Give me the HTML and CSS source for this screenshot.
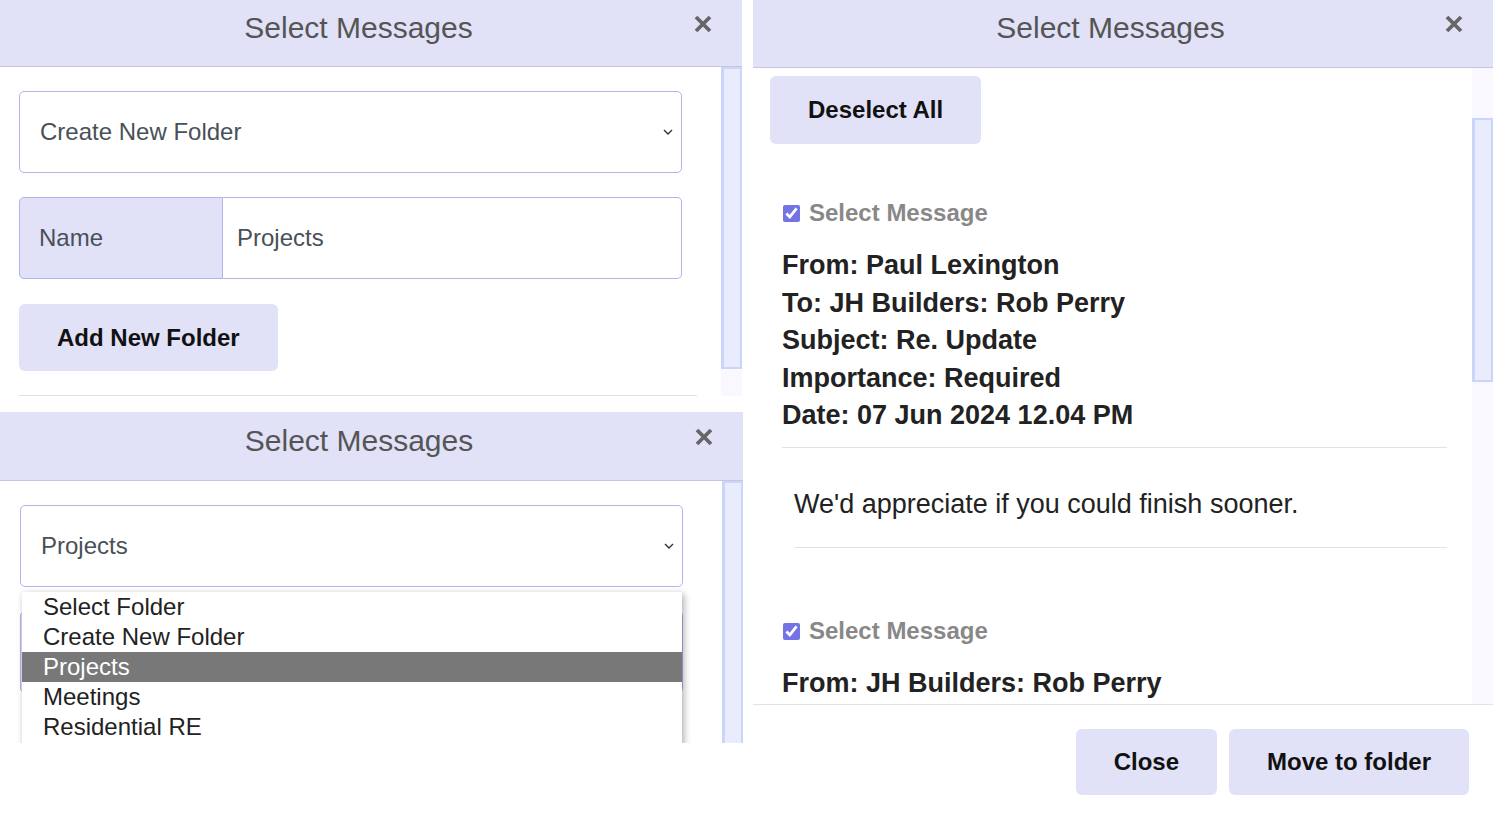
FILE: index.html
```html
<!DOCTYPE html>
<html lang="en">
<head>
<meta charset="utf-8">
<title>Select Messages</title>
<link rel="stylesheet" href="styles.css">
</head>
<body>
<div class="canvas">
  <div class="col-left">
    <section class="modal m1">
      <header class="modal-head">
        <h2 class="modal-title">Select Messages</h2>
        <button class="close" aria-label="Close"><svg viewBox="0 0 18 18"><path d="M2 2L16 16M16 2L2 16"/></svg></button>
      </header>
      <div class="modal-body">
        <div class="pane form-pane">
          <div class="select"><span>Create New Folder</span><svg class="chev" viewBox="0 0 10 6"><path d="M1 1l4 4 4-4"/></svg></div>
          <div class="input-group"><span class="ig-label">Name</span><span class="ig-input">Projects</span></div>
          <button class="btn btn-add">Add New Folder</button>
          <div class="rule"></div>
        </div>
        <div class="scrollbar"><div class="thumb"></div></div>
      </div>
    </section>
    <section class="modal m2">
      <header class="modal-head">
        <h2 class="modal-title">Select Messages</h2>
        <button class="close" aria-label="Close"><svg viewBox="0 0 18 18"><path d="M2 2L16 16M16 2L2 16"/></svg></button>
      </header>
      <div class="modal-body">
        <div class="pane form-pane">
          <div class="select"><span>Projects</span><svg class="chev" viewBox="0 0 10 6"><path d="M1 1l4 4 4-4"/></svg>
            <ul class="dropdown">
              <li>Select Folder</li>
              <li>Create New Folder</li>
              <li class="active">Projects</li>
              <li>Meetings</li>
              <li>Residential RE</li>
            </ul>
          </div>
          <div class="input-group"><span class="ig-label"></span><span class="ig-input"></span></div>
        </div>
        <div class="scrollbar"><div class="thumb"></div></div>
      </div>
    </section>
  </div>
  <section class="modal right">
    <header class="modal-head">
      <h2 class="modal-title">Select Messages</h2>
      <button class="close" aria-label="Close"><svg viewBox="0 0 18 18"><path d="M2 2L16 16M16 2L2 16"/></svg></button>
    </header>
    <div class="modal-body">
      <div class="pane msg-pane">
        <button class="btn btn-deselect">Deselect All</button>
        <div class="msg msg-1">
          <label class="msg-check"><input type="checkbox" checked>Select Message</label>
          <div class="msg-info">
            <div>From: Paul Lexington</div>
            <div>To: JH Builders: Rob Perry</div>
            <div>Subject: Re. Update</div>
            <div>Importance: Required</div>
            <div>Date: 07 Jun 2024 12.04 PM</div>
          </div>
          <div class="msg-rule"></div>
          <div class="msg-text">We'd appreciate if you could finish sooner.</div>
          <div class="msg-rule msg-rule2"></div>
        </div>
        <div class="msg msg-2">
          <label class="msg-check"><input type="checkbox" checked>Select Message</label>
          <div class="msg-info">
            <div>From: JH Builders: Rob Perry</div>
          </div>
        </div>
      </div>
      <div class="scrollbar"><div class="thumb"></div></div>
    </div>
    <footer class="modal-foot">
      <button class="btn btn-foot">Close</button>
      <button class="btn btn-foot">Move to folder</button>
    </footer>
  </section>
</div>
</body>
</html>
```

FILE: styles.css
```css
* { box-sizing: border-box; }
html, body { margin: 0; padding: 0; background: #fff; }
body {
  font-family: "Liberation Sans", Arial, sans-serif;
  color: #222;
  width: 1493px;
  height: 819px;
  overflow: hidden;
}
.canvas { display: flex; align-items: flex-start; }
.col-left { width: 743px; display: flex; flex-direction: column; gap: 16px; }

.modal { background: #fff; display: flex; flex-direction: column; overflow: hidden; }
.m1 { width: 742px; height: 396px; }
.m2 { width: 743px; height: 331px; }
.right { width: 740px; height: 819px; margin-left: 10px; }

.modal-head {
  display: flex;
  align-items: flex-start;
  background: #e1e1f7;
  border-bottom: 1px solid #c6c6da;
  flex: none;
}
.m1 .modal-head { height: 67px; }
.m2 .modal-head { height: 69px; }
.right .modal-head { height: 68px; }

.modal-title {
  flex: 1;
  margin: 0;
  padding-top: 10px;
  text-align: center;
  font-weight: 400;
  font-size: 30px;
  line-height: 36px;
  color: #555;
}
.m2 .modal-title { padding-top: 11px; }

.close {
  width: 48px;
  margin-left: -23px;
  padding: 15px 0 0;
  background: none;
  border: 0;
  display: flex;
  flex: none;
}
.m2 .close { padding-top: 16px; }
.close svg { width: 18px; height: 18px; display: block; }
.close path { stroke: #666; stroke-width: 3.8; fill: none; }

.modal-body { flex: 1; display: flex; min-height: 0; }
.pane { flex: 1; min-width: 0; overflow: hidden; }
.scrollbar { width: 21px; background: #f8f8fe; flex: none; }
.thumb { background: #e8ecfc; border: 2px solid #c9d5fb; border-left-width: 3px; }
.m1 .thumb { height: 302px; }
.m2 .thumb { height: 300px; }
.right .thumb { margin-top: 50px; height: 264px; }

/* left form panels */
.form-pane { padding: 24px 24px 0 19px; }
.m2 .form-pane { padding-left: 20px; }

.select {
  position: relative;
  width: 663px;
  height: 82px;
  border: 1px solid #b3b3ee;
  border-radius: 5px;
  display: flex;
  align-items: center;
  justify-content: space-between;
  padding: 0 8px 0 20px;
  font-size: 24px;
  color: #495057;
}
.chev { width: 10px; height: 6px; display: block; }
.chev path { stroke: #333; stroke-width: 1.4; fill: none; }

.input-group {
  display: flex;
  width: 663px;
  height: 82px;
  margin-top: 24px;
  font-size: 24px;
  color: #495057;
}
.ig-label {
  width: 204px;
  background: #e1e1f7;
  border: 1px solid #b3b3ee;
  border-radius: 5px 0 0 5px;
  display: flex;
  align-items: center;
  padding-left: 19px;
}
.ig-input {
  flex: 1;
  border: 1px solid #b3b3ee;
  border-left: 0;
  border-radius: 0 5px 5px 0;
  display: flex;
  align-items: center;
  padding-left: 14px;
}

.btn {
  height: 67px;
  padding: 0 38px;
  background: #e1e1f7;
  border: 0;
  border-radius: 6px;
  font-family: "Liberation Sans", Arial, sans-serif;
  font-weight: 700;
  font-size: 24px;
  color: #111;
  display: block;
}
.btn-add { margin-top: 25px; }
.rule { height: 1px; background: #e3e3e3; margin-top: 24px; width: 678px; }

.dropdown {
  position: absolute;
  left: 1px;
  top: 86px;
  width: 660px;
  margin: 0;
  padding: 0 0 30px;
  list-style: none;
  background: #fff;
  box-shadow: 2px 2px 7px rgba(0, 0, 0, 0.32);
  z-index: 2;
}
.dropdown li {
  height: 30px;
  line-height: 30px;
  padding-left: 21px;
  font-size: 24px;
  color: #222;
}
.dropdown li.active { background: #787878; color: #fff; }

/* right panel */
.msg-pane { padding: 8px 25px 0 17px; }
.btn-deselect { height: 68px; }
.msg { margin-left: 12px; }
.msg-1 { margin-top: 54px; }
.msg-2 { margin-top: 68px; }
.msg-check {
  display: flex;
  align-items: center;
  height: 30px;
  font-weight: 700;
  font-size: 24px;
  color: #888;
}
.msg-check input {
  width: 17px;
  height: 17px;
  margin: 0 9px 0 1px;
  accent-color: #7373e6;
}
.msg-info {
  margin-top: 19px;
  font-weight: 700;
  font-size: 27px;
  line-height: 37.5px;
  color: #222;
}
.msg-rule { height: 1px; background: #e3e3e3; margin-top: 12px; }
.msg-text {
  margin: 38px 0 0 12px;
  font-size: 27px;
  line-height: 37.5px;
  color: #222;
}
.msg-rule2 { margin: 24px 0 0 12px; }

.modal-foot {
  flex: none;
  height: 115px;
  border-top: 1px solid #e3e3e3;
  display: flex;
  justify-content: flex-end;
  align-items: flex-start;
  gap: 12px;
  padding: 24px 24px 0 0;
}
.btn-foot { height: 66px; }
```
